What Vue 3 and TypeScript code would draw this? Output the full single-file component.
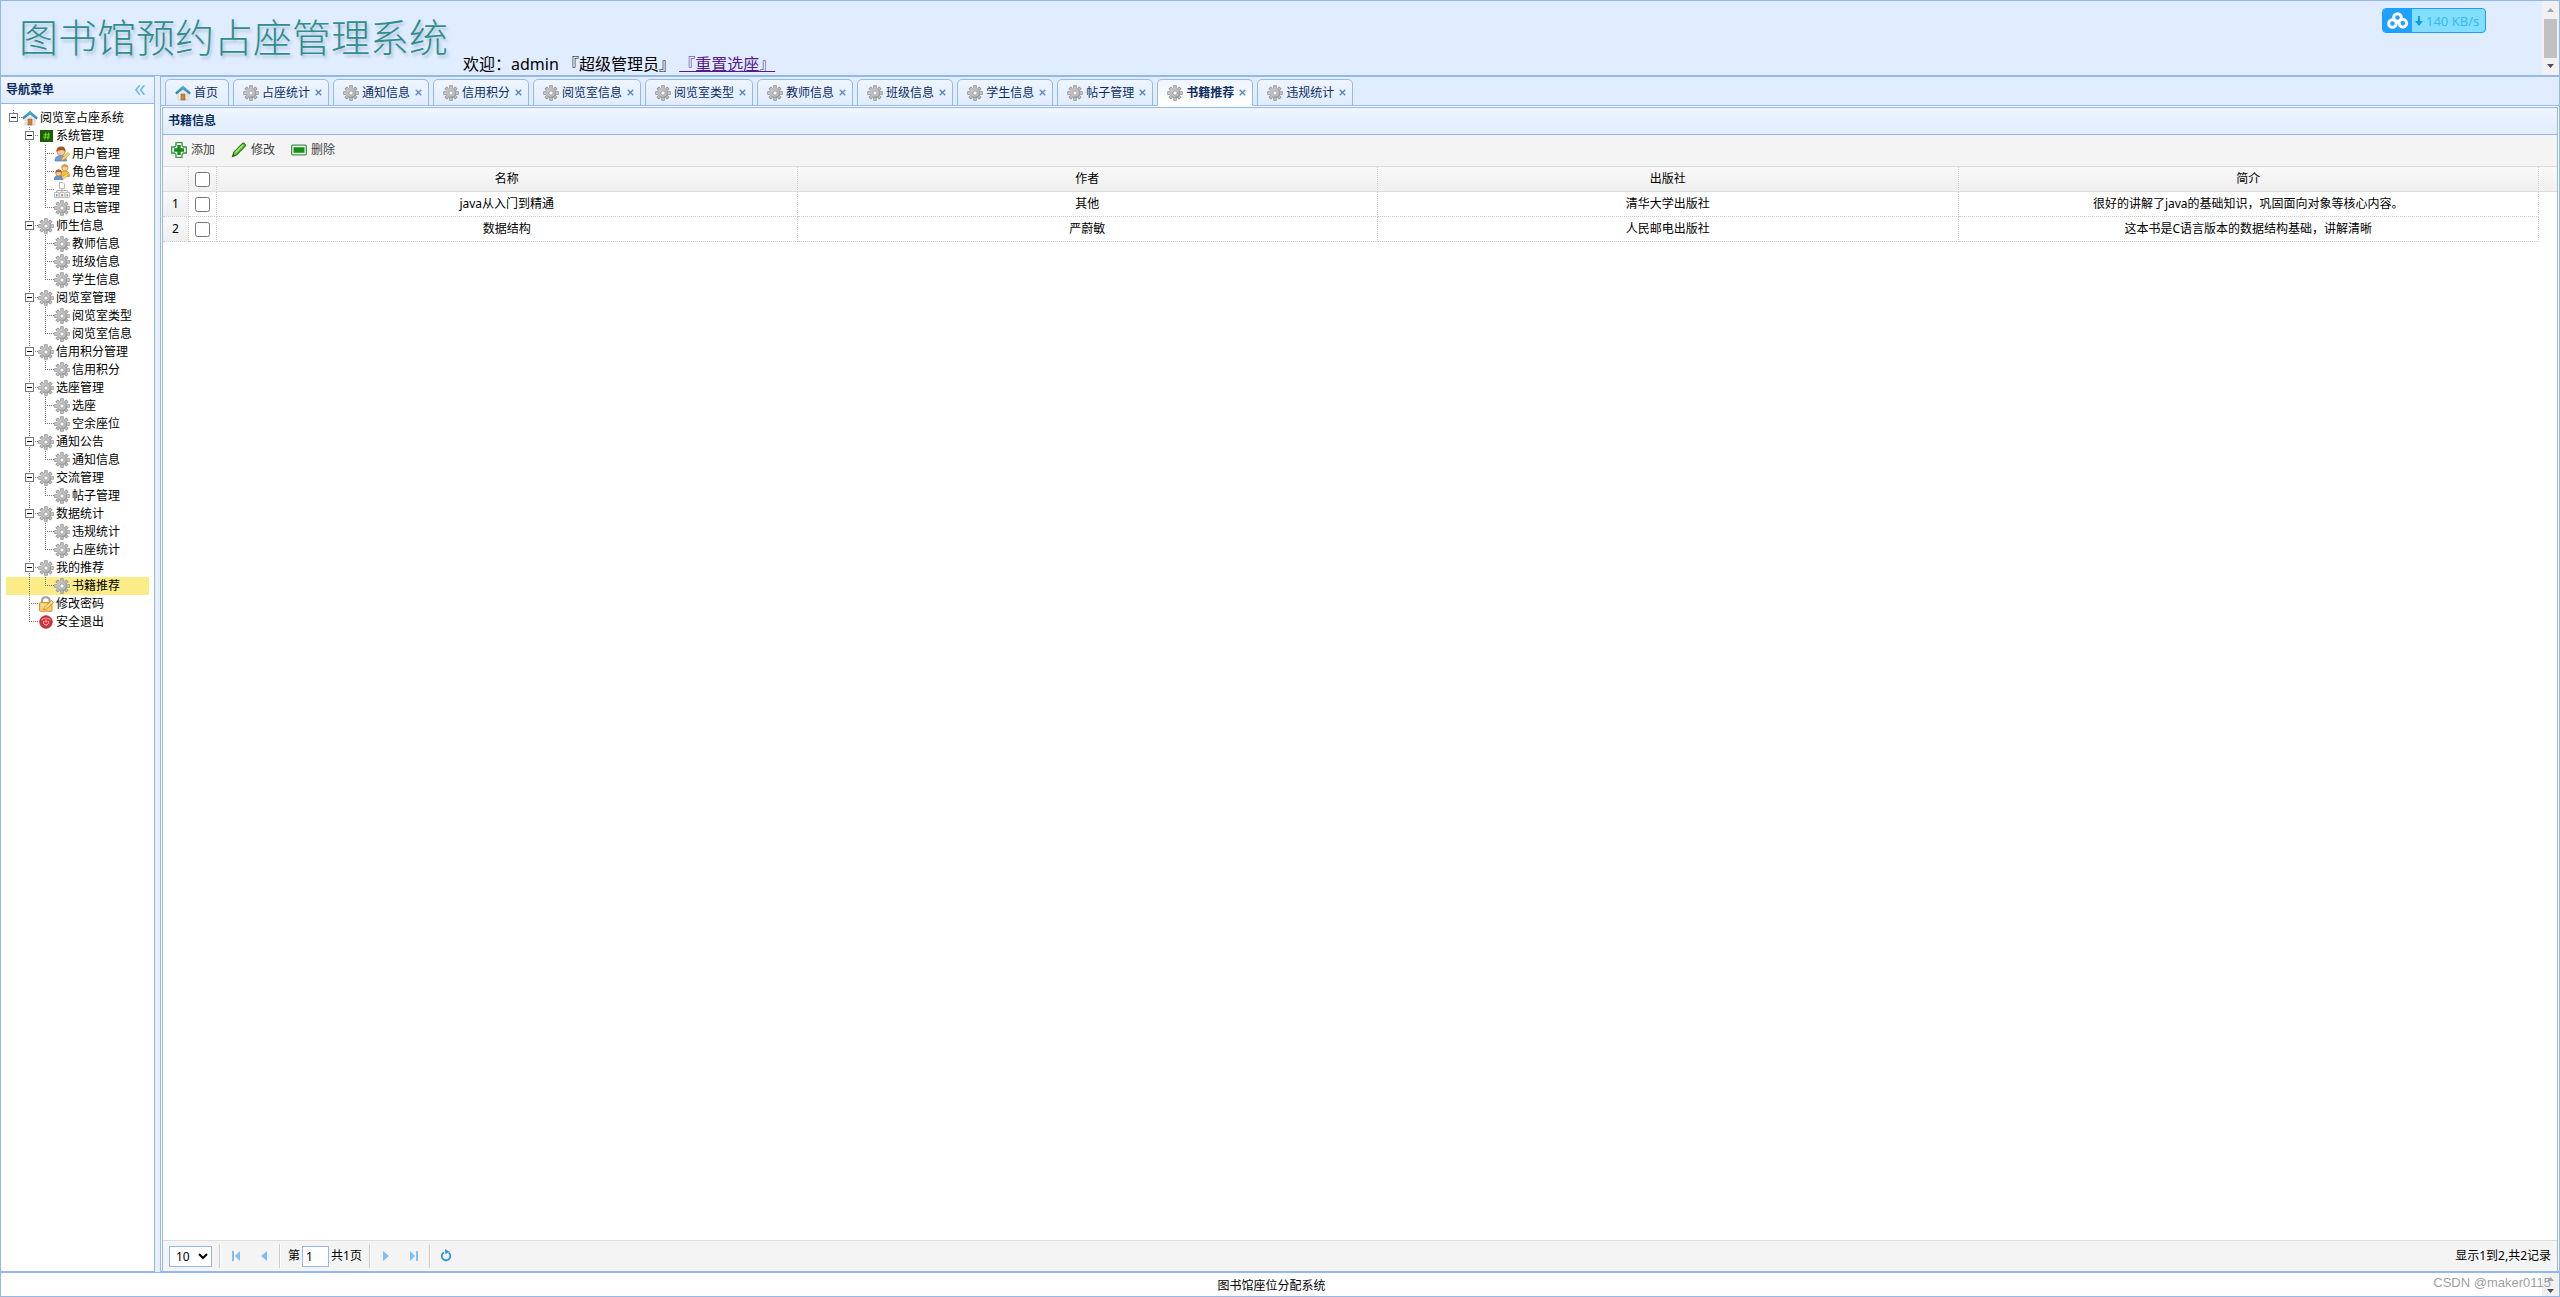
<script setup lang="ts">
import { ref } from 'vue'

type Cell = 'blank' | 'line' | 'join' | 'end' | 'root' | 'open'

interface TreeNode {
  text: string
  icon: string
  children?: TreeNode[]
}

interface TreeRow {
  text: string
  icon: string
  cells: Cell[]
}

interface Tab {
  text: string
  icon: string
  closable: boolean
}

interface Book {
  name: string
  author: string
  press: string
  intro: string
}

const gears = (...names: string[]): TreeNode[] => names.map((text) => ({ text, icon: 'gear' }))

const menu: TreeNode[] = [
  {
    text: '系统管理',
    icon: 'hash',
    children: [
      { text: '用户管理', icon: 'user' },
      { text: '角色管理', icon: 'group' },
      { text: '菜单管理', icon: 'sitemap' },
      { text: '日志管理', icon: 'gear' },
    ],
  },
  { text: '师生信息', icon: 'gear', children: gears('教师信息', '班级信息', '学生信息') },
  { text: '阅览室管理', icon: 'gear', children: gears('阅览室类型', '阅览室信息') },
  { text: '信用积分管理', icon: 'gear', children: gears('信用积分') },
  { text: '选座管理', icon: 'gear', children: gears('选座', '空余座位') },
  { text: '通知公告', icon: 'gear', children: gears('通知信息') },
  { text: '交流管理', icon: 'gear', children: gears('帖子管理') },
  { text: '数据统计', icon: 'gear', children: gears('违规统计', '占座统计') },
  { text: '我的推荐', icon: 'gear', children: gears('书籍推荐') },
  { text: '修改密码', icon: 'lock' },
  { text: '安全退出', icon: 'power' },
]

const rows: TreeRow[] = [{ text: '阅览室占座系统', icon: 'home', cells: ['root'] }]
menu.forEach((node, i) => {
  const last = i === menu.length - 1
  rows.push({
    text: node.text,
    icon: node.icon,
    cells: ['blank', node.children ? 'open' : last ? 'end' : 'join'],
  })
  node.children?.forEach((child, j, all) => {
    rows.push({
      text: child.text,
      icon: child.icon,
      cells: ['blank', last ? 'blank' : 'line', j === all.length - 1 ? 'end' : 'join'],
    })
  })
})

const cellPaths: Record<Cell, string> = {
  blank: '',
  line: 'M7.5 0V18',
  join: 'M7.5 0V18M9 8.5H16',
  end: 'M7.5 0V9M9 8.5H16',
  root: 'M7.5 1V4M13 8.5H16',
  open: 'M7.5 0V4M7.5 14V18M13 8.5H16',
}

const current = ref('书籍推荐')
const tabs: Tab[] = [
  { text: '首页', icon: 'home', closable: false },
  ...['占座统计', '通知信息', '信用积分', '阅览室信息', '阅览室类型', '教师信息', '班级信息', '学生信息', '帖子管理', '书籍推荐', '违规统计'].map(
    (text) => ({ text, icon: 'gear', closable: true }),
  ),
]

const books: Book[] = [
  { name: 'java从入门到精通', author: '其他', press: '清华大学出版社', intro: '很好的讲解了java的基础知识，巩固面向对象等核心内容。' },
  { name: '数据结构', author: '严蔚敏', press: '人民邮电出版社', intro: '这本书是C语言版本的数据结构基础，讲解清晰' },
]
const page = ref('1')
const pageSize = ref('10')
</script>

<template>
  <div class="layout">
    <svg class="defs" aria-hidden="true">
      <defs>
        <linearGradient id="metal" x1="0" y1="0" x2="1" y2="1">
          <stop offset="0" stop-color="#d2d2d2" />
          <stop offset="1" stop-color="#8e8e8e" />
        </linearGradient>
        <linearGradient id="roof" x1="0" y1="0" x2="0" y2="1">
          <stop offset="0" stop-color="#58b8d8" />
          <stop offset="1" stop-color="#1c7fa6" />
        </linearGradient>
        <symbol id="gear" viewBox="0 0 16 16">
          <g stroke="#8f8f8f" stroke-width="3.4">
            <path d="M8 .3V15.7M.3 8H15.7M2.6 2.6L13.4 13.4M13.4 2.6L2.6 13.4" />
          </g>
          <g stroke="#c4c4c4" stroke-width="1.8">
            <path d="M8 1V15M1 8H15M3.1 3.1L12.9 12.9M12.9 3.1L3.1 12.9" />
          </g>
          <circle cx="8" cy="8" r="5.2" fill="url(#metal)" />
          <circle cx="8" cy="8" r="3.6" fill="#c9c9c9" />
          <circle cx="8" cy="8" r="2.2" fill="#fff" stroke="#999" />
        </symbol>
        <symbol id="home" viewBox="0 0 16 16">
          <path d="M3 7.5L8 3.5L13 7.5V15H3Z" fill="#eee9e2" stroke="#c9c2b8" stroke-width=".6" />
          <path d="M6 9h4v6H6z" fill="#c98545" stroke="#96602c" stroke-width=".6" />
          <path d="M8 .6L.3 7.4L1.3 9.6L8 4.4L14.7 9.6L15.7 7.4Z" fill="url(#roof)" />
        </symbol>
        <symbol id="hash" viewBox="0 0 16 16">
          <rect x="2" y="2" width="13" height="12" fill="#1f5a08" />
          <path d="M7.8 4.5L6.8 11.5M10.8 4.5L9.8 11.5M5.3 6.7H12M5 9.3H11.7" stroke="#63e01d" stroke-width="1.1" />
        </symbol>
        <symbol id="user" viewBox="0 0 16 16">
          <path d="M1 15C.8 11.500 3 9.500 7 9.500S12.500 12 12.500 15Z" fill="#6f9fd8" stroke="#3f6fae" stroke-width=".6" />
          <circle cx="7" cy="5.600" r="4" fill="#f6c89a" stroke="#b26a2a" stroke-width=".6" />
          <path d="M2.600 6C2 2 4.500.5 7.300.5S12 2.500 11.400 6C10.500 4.500 9 3.800 7.500 4S4 4.500 2.600 6Z" fill="#9c5a22" />
          <path d="M7.500 14.500L8.200 12L14 6.500L15.600 8.200L10 13.800Z" fill="#ffd75a" stroke="#d88a1e" stroke-width=".7" />
        </symbol>
        <symbol id="group" viewBox="0 0 16 16">
          <path d="M6 12C6 8 8 7 11 7s4.800 2 4.600 5.500Z" fill="#efc24c" stroke="#bb8623" stroke-width=".6" />
          <circle cx="10.800" cy="3.800" r="3.100" fill="#f8cf9f" stroke="#c07a30" stroke-width=".6" />
          <path d="M7.400 3.800C7.400.8 9 .2 10.800.2S14.400 1 14.200 3.800C12.500 2.400 9.500 2.400 7.400 3.800Z" fill="#dd9b35" />
          <path d="M.3 15.500C.3 12.500 2 11.500 4.800 11.500S9 12.800 9 15.500Z" fill="#5f96dc" stroke="#356bb0" stroke-width=".6" />
          <circle cx="4.700" cy="9" r="3" fill="#f6c89a" stroke="#b26a2a" stroke-width=".6" />
          <path d="M1.500 9C1.300 6.200 3 5.600 4.700 5.600S8 6.200 7.900 9C6.300 7.600 3.300 7.600 1.500 9Z" fill="#a65f28" />
          <path d="M7.500 13.500L13 9L14.800 10.500L9.500 15Z" fill="#ffd75a" stroke="#d88a1e" stroke-width=".6" />
        </symbol>
        <symbol id="sitemap" viewBox="0 0 16 16">
          <path d="M8 6V8.500M2.700 10V8.500H13.300V10M8 8.500V10" fill="none" stroke="#aaa" />
          <path d="M5.500.5H9L10.500 2V6.500H5.500Z" fill="#fff" stroke="#bbb" />
          <path d="M.5 10.500H4.800V15.500H.5ZM5.800 10.500H10.200V15.500H5.800ZM11.200 10.500H15.500V15.500H11.200Z" fill="#fff" stroke="#bbb" />
          <path d="M2 12H3.500V14.500H2Z" fill="#5aa3e0" />
          <path d="M7.300 12H8.800V14.500H7.300Z" fill="#e2674a" />
          <path d="M12.600 12H14.100V14.500H12.600Z" fill="#56b45a" />
        </symbol>
        <symbol id="lock" viewBox="0 0 16 16">
          <path d="M4 7V4.800C4 2.400 5.500 1.200 7.800 1.200S11.600 2.400 11.600 4.800V7" fill="none" stroke="#a0a0a0" stroke-width="2" />
          <rect x="1.500" y="6.500" width="12.500" height="8.800" rx=".8" fill="#f8ce6d" stroke="#d8922a" />
          <path d="M3.500 9H9M3.500 11H7" stroke="#fff1c8" />
          <path d="M5.500 13.500L6.500 11L13.500 4.500L15.500 6.500L8.500 13Z" fill="#ffdf78" stroke="#d07a1e" stroke-width=".8" />
        </symbol>
        <symbol id="power" viewBox="0 0 16 16">
          <circle cx="8" cy="8" r="6.200" fill="#d3323c" stroke="#b3202b" />
          <path d="M3.500 6.500C4.500 3.200 11.500 3.200 12.500 6.500" fill="none" stroke="#ea8086" stroke-width="1.200" />
          <path d="M6 7C4.800 8.800 6 11 8 11S11.200 8.800 10 7M8 5.500V8.500" fill="none" stroke="#f8d4d6" stroke-width="1" />
        </symbol>
        <symbol id="add" viewBox="0 0 16 16">
          <path d="M5 .7H11V3.500L12.500 5H15.300V11H12.500L11 12.500V15.300H5V12.500L3.500 11H.7V5H3.500L5 3.500Z" fill="#fff" stroke="#3f9447" stroke-width="1.300" />
          <path d="M6.300 3H9.700V6.300H13V9.700H9.700V13H6.300V9.700H3V6.300H6.300Z" fill="#159015" />
        </symbol>
        <symbol id="edit" viewBox="0 0 16 16">
          <path d="M1.500 14.500L2.800 10.200L11.800 1.300C13 .6 15 2.600 14.300 3.900L5.600 13Z" fill="#5fc52e" stroke="#2c7a1c" stroke-width="1.100" />
          <path d="M4.300 10.600L12 3" stroke="#b8f08c" stroke-width="1.300" />
          <path d="M1.300 14.800L2.300 11.800L4.300 13.700Z" fill="#285c1a" />
        </symbol>
        <symbol id="remove" viewBox="0 0 16 16">
          <rect x=".7" y="3.200" width="14.600" height="9.600" rx="1" fill="#fff" stroke="#3f9447" stroke-width="1.300" />
          <rect x="2.500" y="5.200" width="11" height="5.600" fill="#159015" />
        </symbol>
        <symbol id="first" viewBox="0 0 16 16">
          <path d="M4 3H6V13H4ZM12 3V13L7 8Z" fill="#7fc1ee" />
        </symbol>
        <symbol id="prev" viewBox="0 0 16 16">
          <path d="M11 3V13L5 8Z" fill="#7fc1ee" />
        </symbol>
        <symbol id="next" viewBox="0 0 16 16">
          <path d="M5 3V13L11 8Z" fill="#7fc1ee" />
        </symbol>
        <symbol id="last" viewBox="0 0 16 16">
          <path d="M12 3H10V13H12ZM4 3V13L9 8Z" fill="#7fc1ee" />
        </symbol>
        <symbol id="reload" viewBox="0 0 16 16">
          <path d="M6 4.200A4.300 4.300 0 1 0 10.700 4.600" fill="none" stroke="#2a94d6" stroke-width="1.800" />
          <path d="M7 1L11.500 3.800L7.300 6.300Z" fill="#2a94d6" />
        </symbol>
      </defs>
    </svg>

    <header class="north">
      <div class="banner">
        <h1>图书馆预约占座管理系统</h1>
        <p>欢迎：admin 『超级管理员』 <a href="#reset">『重置选座』</a></p>
      </div>
      <div class="scrollbar" aria-hidden="true">
        <svg width="17" height="17" viewBox="0 0 17 17"><path d="M5 11H12L8.500 7Z" fill="#a3a3a3" /></svg>
        <span class="thumb"></span>
        <svg width="17" height="17" viewBox="0 0 17 17"><path d="M5 6H12L8.500 10Z" fill="#505050" /></svg>
      </div>
      <div class="speed">
        <svg class="cloud" width="29" height="24" viewBox="0 0 29 24" fill="none" stroke="#fff" stroke-width="3">
          <circle cx="14.500" cy="8.500" r="3.800" />
          <circle cx="9.500" cy="14.500" r="3.800" />
          <path d="M15.500 12L17 16.800A3.800 3.800 0 1 0 17.500 11.300" />
        </svg>
        <span class="rate">
          <svg width="8" height="10" viewBox="0 0 8 10"><path d="M3 0H5V5H8L4 10L0 5H3Z" fill="#0c9bf0" /></svg>
          140 KB/s
        </span>
      </div>
    </header>

    <div class="middle">
      <aside class="west">
        <div class="panel-title">
          <h2>导航菜单</h2>
          <button type="button" class="fold" aria-label="收起">
            <svg width="10" height="10" viewBox="0 0 10 10" fill="none" stroke="#6cb4ea" stroke-width="1.500">
              <path d="M4.700 .3L1 5L4.700 9.700M9.300 .3L5.600 5L9.300 9.700" />
            </svg>
          </button>
        </div>
        <ul class="tree">
          <li v-for="row in rows" :key="row.text + row.cells.length" :class="{ selected: row.text === current && row.cells.length === 3 }">
            <svg v-for="(cell, i) in row.cells" :key="i" class="cell" width="16" height="18" viewBox="0 0 16 18" fill="none">
              <path :d="cellPaths[cell]" stroke="#777" stroke-dasharray="1 1" />
              <template v-if="cell === 'root' || cell === 'open'">
                <rect x="3.500" y="4.500" width="8" height="8" fill="#fff" stroke="#777" />
                <path d="M5 8.500H10" stroke="#000" />
              </template>
            </svg>
            <svg class="icon" width="16" height="16"><use :href="'#' + row.icon" /></svg>
            <span>{{ row.text }}</span>
          </li>
        </ul>
      </aside>

      <main class="center">
        <nav class="tabs">
          <div v-for="tab in tabs" :key="tab.text" class="tab" :class="{ active: tab.text === current, closable: tab.closable }">
            <svg class="icon" width="16" height="16"><use :href="'#' + tab.icon" /></svg>
            <button type="button" class="tab-text" @click="current = tab.text">{{ tab.text }}</button>
            <button v-if="tab.closable" type="button" class="close" :aria-label="'关闭' + tab.text">
              <svg width="7" height="7" viewBox="0 0 7 7"><path d="M.7 .7L6.300 6.300M6.300 .7L.7 6.300" stroke="#5b86bf" stroke-width="1.300" /></svg>
            </button>
          </div>
        </nav>

        <section class="panel">
          <div class="panel-title"><h2>书籍信息</h2></div>
          <div class="toolbar">
            <button type="button"><svg class="icon" width="16" height="16"><use href="#add" /></svg>添加</button>
            <button type="button"><svg class="icon" width="16" height="16"><use href="#edit" /></svg>修改</button>
            <button type="button"><svg class="icon" width="16" height="16"><use href="#remove" /></svg>删除</button>
          </div>
          <div class="grid">
            <table>
              <colgroup>
                <col class="col-no" />
                <col class="col-check" />
                <col />
                <col />
                <col />
                <col />
                <col class="col-gutter" />
              </colgroup>
              <thead>
                <tr>
                  <th></th>
                  <th><input type="checkbox" aria-label="全选" /></th>
                  <th>名称</th>
                  <th>作者</th>
                  <th>出版社</th>
                  <th>简介</th>
                  <th class="gutter"></th>
                </tr>
              </thead>
              <tbody>
                <tr v-for="(book, i) in books" :key="book.name">
                  <td class="no">{{ i + 1 }}</td>
                  <td><input type="checkbox" :aria-label="book.name" /></td>
                  <td>{{ book.name }}</td>
                  <td>{{ book.author }}</td>
                  <td>{{ book.press }}</td>
                  <td>{{ book.intro }}</td>
                  <td class="gutter"></td>
                </tr>
              </tbody>
            </table>
          </div>
          <div class="pager">
            <select v-model="pageSize" aria-label="每页条数">
              <option>10</option>
              <option>20</option>
              <option>50</option>
            </select>
            <i class="sep"></i>
            <button type="button" aria-label="首页"><svg width="16" height="16"><use href="#first" /></svg></button>
            <button type="button" aria-label="上一页"><svg width="16" height="16"><use href="#prev" /></svg></button>
            <i class="sep"></i>
            <label class="goto">第<input v-model="page" type="text" />共1页</label>
            <i class="sep"></i>
            <button type="button" aria-label="下一页"><svg width="16" height="16"><use href="#next" /></svg></button>
            <button type="button" aria-label="末页"><svg width="16" height="16"><use href="#last" /></svg></button>
            <i class="sep"></i>
            <button type="button" aria-label="刷新"><svg width="16" height="16"><use href="#reload" /></svg></button>
            <span class="total">显示1到2,共2记录</span>
          </div>
        </section>
      </main>
    </div>

    <footer class="south">
      <p>图书馆座位分配系统</p>
      <div class="scrollbar" aria-hidden="true">
        <svg width="17" height="11" viewBox="0 0 17 11"><path d="M5 8H12L8.500 4Z" fill="#a3a3a3" /></svg>
        <svg width="17" height="11" viewBox="0 0 17 11"><path d="M5 4H12L8.500 8Z" fill="#505050" /></svg>
      </div>
      <span class="watermark">CSDN @maker0115</span>
    </footer>
  </div>
</template>

<style>
body {
  background: #fff;
}
</style>

<style scoped>
.layout {
  display: flex;
  flex-direction: column;
  height: 100vh;
  overflow: hidden;
  background: #e6eef8;
  color: #000;
  font: 12px/18px "Noto Sans", "Noto Sans CJK SC", sans-serif;
}
.layout * {
  box-sizing: border-box;
}
.defs {
  position: absolute;
  width: 0;
  height: 0;
}
h1,
h2,
p,
ul {
  margin: 0;
  padding: 0;
}
button {
  display: flex;
  align-items: center;
  justify-content: center;
  padding: 0;
  border: 0;
  background: none;
  color: inherit;
  font: inherit;
}
svg {
  display: block;
  flex: none;
}

.north {
  position: relative;
  display: flex;
  flex: none;
  height: 76px;
  border: 1px solid #95b8e7;
  background: #e0ecff;
}
.banner {
  display: flex;
  flex: 1;
  align-items: flex-end;
  gap: 15px;
  padding-left: 18px;
}
h1 {
  padding-bottom: 16px;
  color: #2f8f8a;
  font: 300 39px/48px "Noto Sans CJK SC", sans-serif;
  text-shadow: 2px 3px 3px #b4c5dc;
}
.banner p {
  font-size: 16px;
  line-height: 22px;
}
.banner a {
  color: #551a8b;
}
.scrollbar {
  display: flex;
  flex: none;
  flex-direction: column;
  justify-content: space-between;
  align-items: center;
  width: 17px;
  background: #f1f1f1;
}
.thumb {
  width: 13px;
  height: 39px;
  background: #c1c1c1;
}
.speed {
  position: absolute;
  top: 7px;
  right: 73px;
  display: flex;
  width: 104px;
  height: 25px;
  overflow: hidden;
  border: 1px solid #1e9bff;
  border-radius: 4px;
  background: #83dfff;
}
.cloud {
  background: #1fa2ff;
}
.rate {
  display: flex;
  flex: 1;
  align-items: center;
  gap: 3px;
  padding-left: 3px;
  color: #39b8fc;
  font-size: 13px;
}

.middle {
  display: flex;
  flex: 1;
  gap: 5px;
  min-height: 0;
}
.west {
  flex: none;
  width: 155px;
  border: 1px solid #95b8e7;
  background: #fff;
}
.panel-title {
  display: flex;
  flex: none;
  align-items: center;
  justify-content: space-between;
  height: 27px;
  padding: 0 9px 0 5px;
  border-bottom: 1px solid #95b8e7;
  background: linear-gradient(#eff5ff, #e0ecff);
}
h2 {
  color: #0e2d5f;
  font-size: 12px;
  font-weight: 700;
}
.tree {
  padding: 5px;
  list-style: none;
}
.tree li {
  display: flex;
  align-items: center;
  height: 18px;
  white-space: nowrap;
}
.tree .selected {
  background: #fbec88;
}
.tree .icon {
  margin-right: 2px;
}

.center {
  display: flex;
  flex: 1;
  flex-direction: column;
  min-width: 0;
  border: 1px solid #95b8e7;
  background: #fff;
}
.tabs {
  display: flex;
  flex: none;
  gap: 4px;
  height: 29px;
  padding: 2px 4px 0;
  border-bottom: 1px solid #95b8e7;
  background: #e0ecff;
}
.tab {
  display: flex;
  flex: none;
  align-items: center;
  height: 27px;
  padding: 0 10px 0 9px;
  border: 1px solid #95b8e7;
  border-radius: 5px 5px 0 0;
  background: linear-gradient(#eff5ff, #e0ecff);
  color: #0e2d5f;
}
.tab.closable {
  padding-right: 6px;
}
.tab.active {
  border-bottom-color: #fff;
  background: linear-gradient(#eff5ff, #fff);
  font-weight: 700;
}
.tab-text {
  margin-left: 3px;
}
.close {
  margin-left: 5px;
}

.panel {
  display: flex;
  flex: 1;
  flex-direction: column;
  min-height: 0;
  margin: 1px 1px 0;
  border: 1px solid #95b8e7;
  border-bottom: 0;
}
.toolbar {
  display: flex;
  flex: none;
  gap: 16px;
  height: 32px;
  padding: 0 8px 2px;
  border-bottom: 1px solid #ddd;
  background: #f4f4f4;
}
.toolbar button {
  gap: 4px;
  color: #444;
}
.grid {
  flex: 1;
  min-height: 0;
}
table {
  width: 100%;
  border-spacing: 0;
  table-layout: fixed;
}
.col-no {
  width: 26px;
}
.col-check {
  width: 28px;
}
.col-gutter {
  width: 18px;
}
th,
td {
  height: 25px;
  padding: 0;
  border-right: 1px dotted #ccc;
  border-bottom: 1px dotted #ccc;
  font-weight: 400;
  text-align: center;
}
th {
  border-bottom: 1px solid #ddd;
}
thead tr,
.no {
  background: linear-gradient(#f9f9f9, #efefef);
}
.gutter {
  border-right: 0;
}
td.gutter {
  border-bottom: 0;
}
td input,
th input {
  display: block;
  width: 15px;
  height: 15px;
  margin: 0 auto;
}
.pager {
  display: flex;
  flex: none;
  align-items: center;
  height: 31px;
  padding: 0 6px;
  border-top: 1px solid #ddd;
  background: #f4f4f4;
}
.pager select {
  width: 43px;
  height: 21px;
  margin-right: 7px;
  padding: 0 2px;
  border: 1px solid #95b8e7;
  background: #fff;
  color: #000;
  font: inherit;
}
.sep {
  width: 2px;
  height: 24px;
  margin-right: 1px;
  border-right: 1px solid #fff;
  border-left: 1px solid #ccc;
}
.pager button {
  width: 28px;
  height: 24px;
}
.pager button + .sep {
  margin-left: 1px;
}
.goto {
  display: flex;
  align-items: center;
  padding: 0 7px 0 6px;
}
.goto input {
  width: 27px;
  height: 21px;
  margin: 0 2px;
  padding: 0 3px;
  border: 1px solid #95b8e7;
  background: #fff;
  font: inherit;
}
.total {
  margin-left: auto;
}

.south {
  position: relative;
  display: flex;
  flex: none;
  height: 25px;
  border: 1px solid #95b8e7;
  background: #fff;
}
.south p {
  flex: 1;
  padding-top: 4px;
  text-align: center;
}
.watermark {
  position: absolute;
  right: 8px;
  top: 0;
  color: #a0a0a0;
  font: 13px/20px "Liberation Sans", sans-serif;
}
</style>
